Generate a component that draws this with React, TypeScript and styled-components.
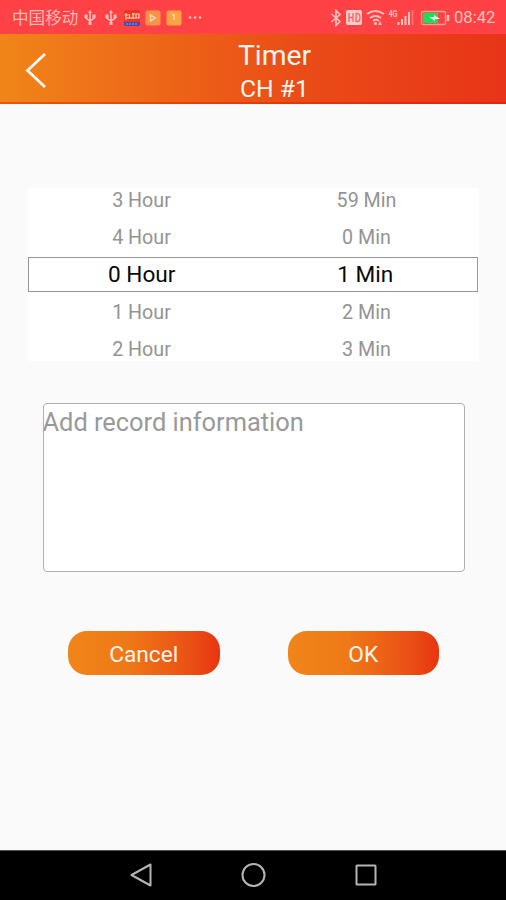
import React from 'react';
import styled, { createGlobalStyle } from 'styled-components';

const GlobalStyle = createGlobalStyle`
  * { box-sizing: border-box; }
  body { margin: 0; background: #fafafa; font-family: Roboto, "Noto Sans CJK SC", sans-serif; }
`;

const Screen = styled.div`
  width: 506px;
  height: 900px;
  display: flex;
  flex-direction: column;
  background: #fafafa;
  overflow: hidden;
`;

const StatusBar = styled.div`
  height: 34px;
  flex: none;
  display: flex;
  justify-content: space-between;
  padding: 0 10px 0 12px;
  background: #ff4245;
  color: #ffb9b4;
`;

const StatusGroup = styled.div`
  display: flex;
  align-items: center;
  height: 36px;
`;

const Carrier = styled.span`
  font-size: 16.6px;
  line-height: 36px;
  padding-top: 2px;
  white-space: nowrap;
`;

const Clock = styled.span`
  font-size: 16.6px;
  line-height: 36px;
  width: 42px;
  margin-left: 4px;
  color: #ffc0bb;
`;

const Header = styled.header`
  height: 70px;
  flex: none;
  display: grid;
  grid-template-columns: 72px 1fr;
  background: linear-gradient(90deg, #f08519 0%, #ea4d17 58%, #e83418 100%);
  border-bottom: 2px solid rgba(222, 16, 0, 0.4);
`;

const BackButton = styled.button`
  border: 0;
  padding: 0 0 0 24px;
  background: none;
  display: flex;
  align-items: center;
`;

const Titles = styled.div`
  display: flex;
  flex-direction: column;
  align-items: center;
  padding: 5px 0 0 43px;
  width: 362px;
  color: #fff5ee;
  white-space: nowrap;
`;

const Title = styled.div`
  font-size: 28.3px;
  line-height: 34px;
`;

const Subtitle = styled.div`
  font-size: 24.7px;
  line-height: 32px;
`;

const Content = styled.main`
  flex: 1;
  display: flex;
  flex-direction: column;
  padding: 84px 27px 0 28px;
`;

const Picker = styled.div`
  height: 173px;
  flex: none;
  display: flex;
  flex-direction: column;
  justify-content: center;
  overflow: hidden;
  background: #fff;
`;

const PickerRow = styled.div<{ $selected?: boolean }>`
  flex: none;
  height: ${p => (p.$selected ? 35 : 37.5)}px;
  margin: ${p => (p.$selected ? '1px 1px 1px 0' : '0')};
  padding: ${p => (p.$selected ? '0 0 0 1px' : '1px 0 0 1px')};
  display: grid;
  grid-template-columns: 1fr 1fr;
  align-items: center;
  text-align: center;
  font-size: ${p => (p.$selected ? 22.6 : 19.7)}px;
  color: ${p => (p.$selected ? '#080808' : '#939393')};
  border: ${p => (p.$selected ? '1px solid #969696' : '0')};
`;

const RecordInput = styled.textarea`
  display: block;
  width: 422px;
  height: 169px;
  flex: none;
  margin: 42px 0 0 14.5px;
  padding: 3px 0;
  border: 1px solid #b0b0b0;
  border-radius: 4px;
  background: #fff;
  resize: none;
  outline: 0;
  font: 25.4px/30px Roboto, sans-serif;
  text-indent: -1px;
  &::placeholder { color: #999; opacity: 1; }
`;

const Actions = styled.div`
  display: flex;
  gap: 68px;
  margin: 59px 0 0 40px;
`;

const ActionButton = styled.button`
  width: 151.5px;
  height: 44px;
  border: 0;
  border-radius: 19px;
  padding: 3px 0 0;
  background: linear-gradient(90deg, #f08519 0%, #ef7817 40%, #ea4e15 82%, #e83411 100%);
  color: #fff3ea;
  font: 22.7px/40px Roboto, sans-serif;
`;

const NavBar = styled.nav`
  height: 50px;
  flex: none;
  display: flex;
  justify-content: center;
  background: #000;
  border-top: 1px solid #555;
`;

const Bluetooth = () => (
  <svg width="12" height="18" viewBox="0 0 12 18" fill="none" stroke="#ffc8c3" strokeWidth="1.5">
    <path d="M1.5 5 10 12.5 6 16.5V1.5L10 5.5 1.5 13" />
  </svg>
);

const Usb = () => (
  <svg width="12" height="16" viewBox="0 0 12 16" fill="none" stroke="#ffc0bb" strokeWidth="1.5">
    <path d="M6 2v12M1.8 6v2L6 11l4.200-3V6" />
    <path d="M6 0 8 3H4zM0.500 4.500h3v3.500h-3zM8.500 4.500h3v3.500h-3zM4.500 12h3v3h-3z" fill="#ffc0bb" stroke="none" />
  </svg>
);

const LeftIcons = () => (
  <svg width="126" height="36" viewBox="0 0 126 36">
    <svg x="6" y="10"><Usb /></svg>
    <svg x="27" y="10"><Usb /></svg>
    <rect x="46" y="10" width="16" height="13" rx="1" fill="#ef3420" />
    <path d="M46 22h16v2q0 2-2 2H48q-2 0-2-2z" fill="#464bb2" />
    <path d="M48 13v7M46.500 15h4M51.500 14v5M54 14h3M55 13v6M58 14h3v4h-3zM49 18h12" stroke="#ffd4be" strokeWidth="1.2" fill="none" />
    <path d="M48 24h12" stroke="#91a2df" strokeDasharray="2 1" />
    <rect x="67.500" y="10.5" width="15" height="15" rx="2" fill="#f99446" />
    <path d="m72.500 15 5 3-5 3z" fill="none" stroke="#ffd2ae" strokeWidth="1.5" />
    <rect x="88.500" y="10.5" width="15" height="15" rx="2" fill="#ffa144" />
    <path d="M96 14v6M94 15h3" stroke="#ffd2a0" strokeWidth="1.6" />
    <g fill="#ffc0bb"><circle cx="112" cy="17.500" r="1.300" /><circle cx="117" cy="17.500" r="1.300" /><circle cx="122" cy="17.500" r="1.300" /></g>
  </svg>
);

const RightIcons = () => (
  <svg width="120" height="36" viewBox="0 0 120 36">
    <svg x="0" y="9"><Bluetooth /></svg>
    <rect x="16" y="10" width="16" height="15" rx="2" fill="#ffcfcb" />
    <path d="M19 13v9M23 13v9M19 17.500h4M26 13.500h1.500q2.500 0 2.500 4t-2.500 4H26z" stroke="#ff6464" strokeWidth="1.400" fill="none" />
    <g fill="none" stroke="#ffc0bb" strokeWidth="1.800">
      <path d="M37 14q8-6 17 0M40 18q5.500-4 11 0M43 21q3-2.500 6 0" />
      <path d="m48 25 2-4 2 4z" fill="#ffc0bb" stroke="none" />
    </g>
    <circle cx="45.500" cy="23.500" r="1.500" fill="#ffc0bb" />
    <text x="58.500" y="17" fontSize="9" fontWeight="700" textLength="9" lengthAdjust="spacingAndGlyphs" fill="#ffc0bb">4G</text>
    <path d="M68.500 25v-3M72 25v-6M75.500 25v-9M79 25V12" stroke="#ffc8c3" strokeWidth="2" />
    <path d="M82.500 25V10" stroke="#ff7775" strokeWidth="1.5" />
    <rect x="91.500" y="11.500" width="24" height="13" rx="1.500" fill="none" stroke="#eba19a" strokeWidth="1.300" />
    <path d="M93 13h15v10H93z" fill="#16df58" />
    <path d="M99 17h5v-2l6 4h-5v2z" fill="#e9ffe7" />
    <path d="M118 15v6" stroke="#ffc0bb" strokeWidth="2.500" />
  </svg>
);

const rows = [
  ['3 Hour', '59 Min'],
  ['4 Hour', '0 Min'],
  ['0 Hour', '1 Min'],
  ['1 Hour', '2 Min'],
  ['2 Hour', '3 Min'],
];

export default function App() {
  return (
    <>
      <GlobalStyle />
      <Screen>
        <StatusBar>
          <StatusGroup><Carrier>中国移动</Carrier><LeftIcons /></StatusGroup>
          <StatusGroup><RightIcons /><Clock>08:42</Clock></StatusGroup>
        </StatusBar>
        <Header>
          <BackButton aria-label="Back">
            <svg width="24" height="38" viewBox="0 0 24 38" fill="none" stroke="#fff6ed" strokeWidth="2.800">
              <path d="M21 3 3.500 19.500 21 36" />
            </svg>
          </BackButton>
          <Titles><Title>Timer</Title><Subtitle>CH #1</Subtitle></Titles>
        </Header>
        <Content>
          <Picker>
            {rows.map(([hour, minute], i) => (
              <PickerRow key={hour} $selected={i === 2}><span>{hour}</span><span>{minute}</span></PickerRow>
            ))}
          </Picker>
          <RecordInput placeholder="Add record information" />
          <Actions><ActionButton>Cancel</ActionButton><ActionButton>OK</ActionButton></Actions>
        </Content>
        <NavBar>
          <svg width="250" height="49" viewBox="0 0 250 49" fill="none" stroke="#b5b5b5" strokeWidth="2" strokeLinejoin="round">
            <path d="M22.500 13.500v21L3.500 24z" />
            <circle cx="125.500" cy="24" r="11" />
            <rect x="228.500" y="14.500" width="19" height="19" rx="0.500" />
          </svg>
        </NavBar>
      </Screen>
    </>
  );
}
